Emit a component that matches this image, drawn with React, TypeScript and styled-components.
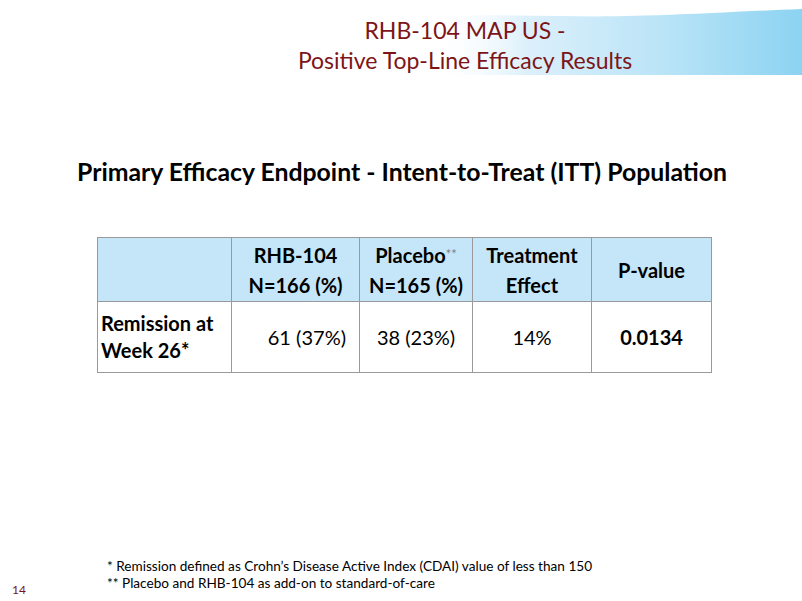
import React from 'react';
import styled, { createGlobalStyle } from 'styled-components';

const TITLE_RED = '#7d1518';
const HEAD_BLUE = '#c5e6f8';
const GRID = '#9a9a9a';

const GlobalStyle = createGlobalStyle`
  html, body {
    margin: 0;
    padding: 0;
    background: #ffffff;
  }
  body {
    font-family: Lato, "Open Sans", sans-serif;
    color: #000;
  }
`;

const Slide = styled.div`
  position: relative;
  display: flex;
  flex-direction: column;
  width: 802px;
  height: 601px;
  overflow: hidden;
  background: #fff;
`;

const Header = styled.header`
  position: relative;
  height: 75px;
  padding-top: 15px;
  box-sizing: border-box;
  display: flex;
  flex-direction: column;
  align-items: center;
  padding-left: 128px;
`;

const Banner = styled.svg`
  position: absolute;
  left: 0;
  top: 0;
  width: 802px;
  height: 75px;
  z-index: 0;
`;

const TitleLine = styled.div`
  position: relative;
  z-index: 1;
  font-size: 23px;
  line-height: 30px;
  color: ${TITLE_RED};
  white-space: nowrap;
`;

const Subheading = styled.h2`
  margin: 82px 0 0 77px;
  font-size: 24.8px;
  line-height: 30px;
  font-weight: 700;
  white-space: nowrap;
`;

const Table = styled.table`
  margin: 50px 0 0 97px;
  border-collapse: collapse;
  table-layout: fixed;
  width: 614px;
  font-size: 20px;
`;

const HeadCell = styled.th`
  background: ${HEAD_BLUE};
  border: 1px solid ${GRID};
  height: 63px;
  padding: 0 2px;
  font-weight: 700;
  line-height: 30px;
  text-align: center;
  vertical-align: middle;
  white-space: nowrap;
`;

const HeadSub = styled.span`
  line-height: 30px;
  display: inline-block;
`;

const Stars = styled.span`
  color: #7f7f7f;
  font-weight: 400;
  font-size: 13px;
  vertical-align: 4px;
`;

const BodyCell = styled.td<{ $align?: 'left' | 'center' | 'right'; $bold?: boolean }>`
  border: 1px solid ${GRID};
  border-top: none;
  height: 70px;
  padding: ${p => (p.$align === 'right' ? '0 13px 0 2px' : '0 3px')};
  text-align: ${p => p.$align || 'center'};
  font-weight: ${p => (p.$bold ? 700 : 400)};
  line-height: 27px;
  vertical-align: middle;
  white-space: nowrap;
`;

const Footer = styled.footer`
  margin-top: auto;
  display: flex;
  align-items: flex-end;
  padding: 0 0 3px 12px;
`;

const PageNumber = styled.div`
  width: 95px;
  font-size: 12px;
  line-height: 16px;
  color: ${TITLE_RED};
`;

const Notes = styled.div`
  font-size: 13.6px;
  line-height: 17px;
  padding-bottom: 6px;
`;

const columns = [134, 128, 113, 119, 120];

const App = () => {
  return (
    <Slide>
      <GlobalStyle />
      <Header>
        <Banner viewBox="0 0 802 75" preserveAspectRatio="none">
          <defs>
            <linearGradient id="bannerFill" x1="0" y1="0" x2="1" y2="0">
              <stop offset="0.33" stopColor="#ffffff" stopOpacity="0" />
              <stop offset="0.5" stopColor="#dcf0fb" />
              <stop offset="0.75" stopColor="#bae4f7" />
              <stop offset="1" stopColor="#8cd3f2" />
            </linearGradient>
          </defs>
          <path
            d="M250 22 C 380 17, 470 14, 560 16 C 640 18, 700 13, 802 9 L802 75 L250 75 Z"
            fill="url(#bannerFill)"
          />
        </Banner>
        <TitleLine>RHB-104 MAP US -</TitleLine>
        <TitleLine>Positive Top-Line Efficacy Results</TitleLine>
      </Header>

      <Subheading>Primary Efficacy Endpoint - Intent-to-Treat (ITT) Population</Subheading>

      <Table>
        <colgroup>
          {columns.map((w, i) => (
            <col key={i} style={{ width: w }} />
          ))}
        </colgroup>
        <thead>
          <tr>
            <HeadCell />
            <HeadCell>
              RHB-104
              <br />
              <HeadSub>N=166 (%)</HeadSub>
            </HeadCell>
            <HeadCell>
              Placebo<Stars>**</Stars>
              <br />
              <HeadSub>N=165 (%)</HeadSub>
            </HeadCell>
            <HeadCell>
              Treatment
              <br />
              <HeadSub>Effect</HeadSub>
            </HeadCell>
            <HeadCell>P-value</HeadCell>
          </tr>
        </thead>
        <tbody>
          <tr>
            <BodyCell $align="left" $bold>
              Remission at
              <br />
              Week 26*
            </BodyCell>
            <BodyCell $align="right">61 (37%)</BodyCell>
            <BodyCell>38 (23%)</BodyCell>
            <BodyCell>14%</BodyCell>
            <BodyCell $bold>0.0134</BodyCell>
          </tr>
        </tbody>
      </Table>

      <Footer>
        <PageNumber>14</PageNumber>
        <Notes>
          <div>* Remission defined as Crohn’s Disease Active Index (CDAI) value of less than 150</div>
          <div>** Placebo and RHB-104 as add-on to standard-of-care</div>
        </Notes>
      </Footer>
    </Slide>
  );
};

export default App;
